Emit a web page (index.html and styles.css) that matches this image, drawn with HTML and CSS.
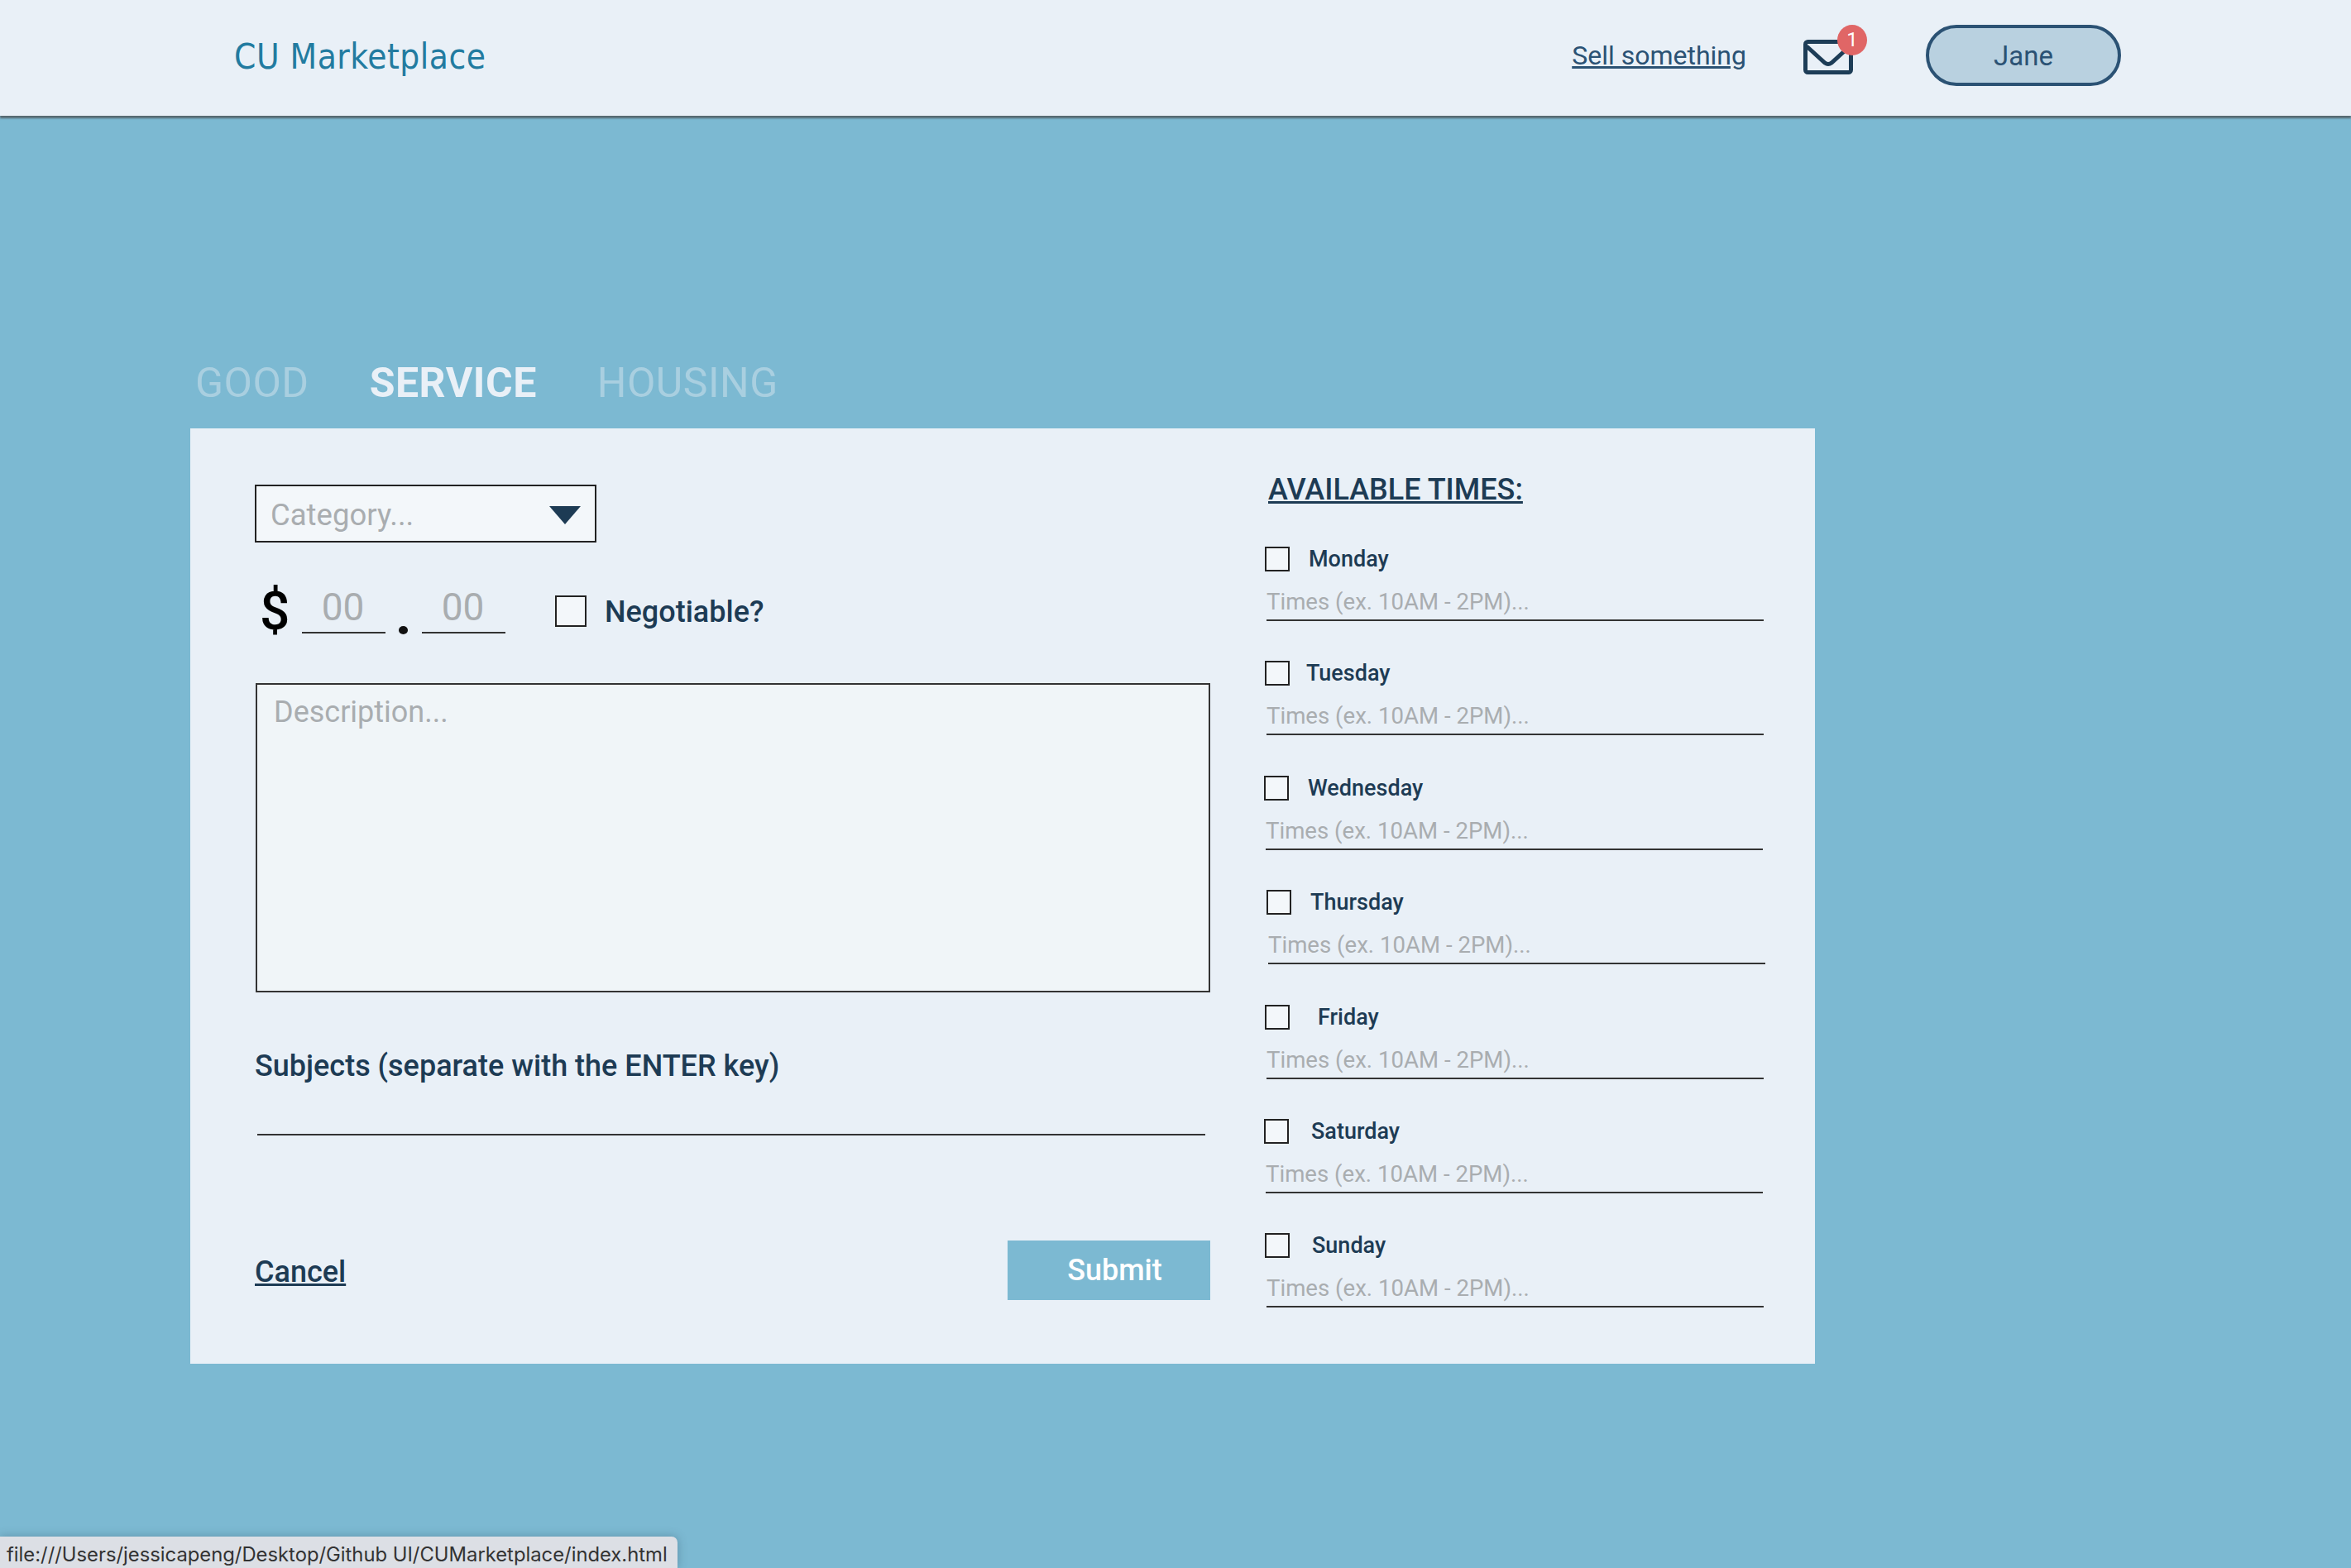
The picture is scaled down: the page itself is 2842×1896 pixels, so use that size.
FILE: index.html
```html
<!DOCTYPE html>
<html>
<head>
    <title>CU Marketplace</title>
    <link rel="stylesheet" href="styles.css">
</head>
<body>

<header class="navbar">
    <a class="brand" href="#">CU Marketplace</a>
    <nav class="nav-right">
        <a class="sell-link" href="#">Sell something</a>
        <a class="inbox" href="#">
            <svg class="inbox-icon" viewBox="0 0 60 42" width="60" height="42">
                <rect x="2.5" y="2.5" width="55" height="37" rx="3" fill="none" stroke="#1d3d57" stroke-width="5"/>
                <path d="M4 8 L26 28 Q30 31 34 28 L56 8" fill="none" stroke="#1d3d57" stroke-width="5"/>
            </svg>
            <span class="inbox-badge">1</span>
        </a>
        <button class="user-btn">Jane</button>
    </nav>
</header>

<main class="page">
    <div class="tabs">
        <a class="tab" href="#">GOOD</a>
        <a class="tab tab-active" href="#">SERVICE</a>
        <a class="tab" href="#">HOUSING</a>
    </div>

    <form class="card">
        <div class="main-col">
            <div class="category">
                <select class="category-select">
                    <option>Category...</option>
                </select>
            </div>

            <div class="price-row">
                <span class="dollar">$</span>
                <input class="price-input" type="text" placeholder="00">
                <span class="price-dot"></span>
                <input class="price-input" type="text" placeholder="00">
                <input class="check check-big" type="checkbox" id="negotiable">
                <label class="negotiable-label" for="negotiable">Negotiable?</label>
            </div>

            <textarea class="description" placeholder="Description..."></textarea>

            <label class="subjects-label" for="subjects">Subjects (separate with the ENTER key)</label>
            <input class="subjects-input" type="text" id="subjects">

            <div class="actions">
                <a class="cancel" href="#">Cancel</a>
                <button class="submit" type="button">Submit</button>
            </div>
        </div>

        <div class="times-col">
            <h2 class="times-title">AVAILABLE TIMES:</h2>

            <div class="day">
                <div class="day-head">
                    <input class="check" type="checkbox" id="monday">
                    <label class="day-label" for="monday">Monday</label>
                </div>
                <input class="time-input" type="text" placeholder="Times (ex. 10AM - 2PM)...">
            </div>

            <div class="day">
                <div class="day-head">
                    <input class="check" type="checkbox" id="tuesday">
                    <label class="day-label day-label-tight" for="tuesday">Tuesday</label>
                </div>
                <input class="time-input" type="text" placeholder="Times (ex. 10AM - 2PM)...">
            </div>

            <div class="day day-back">
                <div class="day-head">
                    <input class="check" type="checkbox" id="wednesday">
                    <label class="day-label" for="wednesday">Wednesday</label>
                </div>
                <input class="time-input" type="text" placeholder="Times (ex. 10AM - 2PM)...">
            </div>

            <div class="day day-on">
                <div class="day-head">
                    <input class="check" type="checkbox" id="thursday">
                    <label class="day-label" for="thursday">Thursday</label>
                </div>
                <input class="time-input" type="text" placeholder="Times (ex. 10AM - 2PM)...">
            </div>

            <div class="day">
                <div class="day-head">
                    <input class="check" type="checkbox" id="friday">
                    <label class="day-label day-label-friday" for="friday">Friday</label>
                </div>
                <input class="time-input" type="text" placeholder="Times (ex. 10AM - 2PM)...">
            </div>

            <div class="day day-back">
                <div class="day-head">
                    <input class="check" type="checkbox" id="saturday">
                    <label class="day-label day-label-wide" for="saturday">Saturday</label>
                </div>
                <input class="time-input" type="text" placeholder="Times (ex. 10AM - 2PM)...">
            </div>

            <div class="day">
                <div class="day-head">
                    <input class="check" type="checkbox" id="sunday">
                    <label class="day-label day-label-wide" for="sunday">Sunday</label>
                </div>
                <input class="time-input" type="text" placeholder="Times (ex. 10AM - 2PM)...">
            </div>
        </div>
    </form>
</main>

<div class="status-bubble">file:///Users/jessicapeng/Desktop/Github UI/CUMarketplace/index.html</div>

</body>
</html>
```

FILE: styles.css
```css
* {
    box-sizing: border-box;
}

html, body {
    height: 100%;
}

body {
    margin: 0;
    background-color: #7cb9d2;
    font-family: "Roboto", sans-serif;
    color: #1d3b54;
    overflow: hidden;
}

a {
    color: inherit;
}

input, textarea, select, button {
    font-family: "Roboto", sans-serif;
    outline: none;
}

input::placeholder, textarea::placeholder {
    color: #a9adb0;
    opacity: 1;
}

/* navbar */
.navbar {
    display: flex;
    align-items: center;
    height: 140px;
    padding: 0 278px 0 283px;
    background-color: #e9f0f7;
    box-shadow: 0 3px 2px rgba(70, 70, 70, 0.7);
}

.brand {
    font-family: "DejaVu Sans", sans-serif;
    font-stretch: condensed;
    font-size: 42px;
    letter-spacing: 0.5px;
    margin-top: -4px;
    color: #227ba0;
    text-decoration: none;
}

.nav-right {
    display: flex;
    align-items: center;
    margin-left: auto;
}

.sell-link {
    font-size: 32px;
    color: #2b5274;
    margin: -6px 69px 0 0;
}

.inbox {
    position: relative;
    display: block;
    width: 60px;
    height: 42px;
    margin-right: 88px;
    margin-top: -2px;
}

.inbox-icon {
    display: block;
}

.inbox-badge {
    position: absolute;
    top: -18px;
    left: 41px;
    width: 36px;
    height: 37px;
    border-radius: 50%;
    background-color: #e06666;
    color: #fff;
    font-size: 24px;
    line-height: 37px;
    text-align: center;
}

.user-btn {
    width: 236px;
    height: 74px;
    border: 4px solid #2b5274;
    border-radius: 37px;
    background-color: #b9d1e0;
    color: #2b5274;
    font-size: 33px;
    margin-top: -6px;
}

/* tabs */
.page {
    padding: 294px 0 0 230px;
}

.tabs {
    display: flex;
    gap: 73px;
    padding: 0 0 26px 6px;
}

.tab {
    font-size: 50px;
    line-height: 58px;
    letter-spacing: 0.5px;
    color: #a9cfe0;
    text-decoration: none;
}

.tab-active {
    font-weight: 700;
    color: #e9f0f7;
}

/* form card */
.card {
    display: flex;
    width: 1964px;
    height: 1131px;
    padding: 68px 0 0 78px;
    background-color: #e9f0f7;
}

.main-col {
    width: 1155px;
    margin-right: 66px;
}

.category {
    position: relative;
    width: 413px;
    height: 70px;
}

.category:after {
    content: "";
    position: absolute;
    top: 26px;
    right: 19px;
    border-left: 19px solid transparent;
    border-right: 19px solid transparent;
    border-top: 22px solid #1d3b54;
}

.category-select {
    width: 100%;
    height: 100%;
    padding: 3px 0 0 17px;
    appearance: none;
    border: 2px solid #222;
    border-radius: 0;
    background-color: #f3f7fa;
    color: #a9adb0;
    font-size: 36.5px;
}

.price-row {
    display: flex;
    align-items: flex-end;
    height: 109px;
    padding-left: 6px;
}

.dollar {
    width: 51px;
    font-size: 64px;
    line-height: 76px;
    font-weight: 500;
    color: #000;
    margin-bottom: -13px;
}

.price-input {
    width: 101px;
    height: 60px;
    padding: 0 2px 2px 0;
    border: none;
    border-bottom: 2px solid #333;
    background: none;
    font-size: 46px;
    text-align: center;
    margin-bottom: -1px;
}

.price-dot {
    width: 11px;
    height: 10px;
    border-radius: 50%;
    background-color: #111;
    margin: 0 17px -2px 16px;
}

.check {
    flex: none;
    appearance: none;
    width: 30px;
    height: 30px;
    margin: 0;
    border: 2px solid #222;
    background-color: #f3f7fa;
}

.check-big {
    width: 38px;
    height: 38px;
    margin-left: 60px;
    margin-bottom: 7px;
}

.negotiable-label {
    font-size: 36px;
    font-weight: 500;
    margin-left: 22px;
    margin-bottom: 4px;
}

.description {
    display: block;
    width: 1154px;
    height: 374px;
    margin: 61px 0 0 1px;
    padding: 12px 20px;
    border: 2px solid #333;
    border-radius: 0;
    background-color: #f0f5f8;
    font-size: 36px;
    resize: none;
}

.subjects-label {
    display: block;
    margin-top: 67px;
    font-size: 36px;
    line-height: 45px;
    font-weight: 500;
}

.subjects-input {
    display: block;
    width: 1146px;
    height: 48px;
    margin: 13px 0 0 3px;
    border: none;
    border-bottom: 2px solid #333;
    background: none;
}

.actions {
    display: flex;
    justify-content: space-between;
    align-items: center;
    margin-top: 127px;
}

.cancel {
    font-size: 36px;
    font-weight: 500;
    margin-top: 4px;
}

.submit {
    width: 245px;
    height: 72px;
    padding-left: 20px;
    border: none;
    background-color: #7cb9d2;
    color: #fff;
    font-size: 36px;
    font-weight: 500;
}

/* available times */
.times-col {
    width: 603px;
}

.times-title {
    margin: -17px 0 46px 4px;
    font-size: 36px;
    line-height: 46px;
    font-weight: 500;
    text-decoration: underline;
}

.day {
    height: 138.4px;
}

.day-back {
    margin-left: -1px;
}

.day-on {
    margin-left: 2px;
}

.day-head {
    display: flex;
    align-items: center;
    height: 30px;
}

.day-label {
    font-size: 27px;
    font-weight: 500;
    margin-left: 23px;
}

.day-label-tight {
    margin-left: 20px;
}

.day-label-friday {
    margin-left: 34px;
}

.day-label-wide {
    margin-left: 27px;
}

.time-input {
    display: block;
    width: 601px;
    height: 60px;
    margin-left: 2px;
    padding: 15px 0 0 0;
    border: none;
    border-bottom: 2px solid #333;
    background: none;
    font-size: 27.6px;
}

/* status bubble */
.status-bubble {
    position: absolute;
    left: 0;
    bottom: 0;
    width: 819px;
    height: 38px;
    padding-left: 8px;
    background-color: #dcdfe5;
    border-top-right-radius: 7px;
    box-shadow: 0 0 12px rgba(40, 70, 90, 0.35);
    font-family: "Inter", sans-serif;
    font-size: 23.8px;
    line-height: 43px;
    color: #333;
    white-space: nowrap;
}
```
